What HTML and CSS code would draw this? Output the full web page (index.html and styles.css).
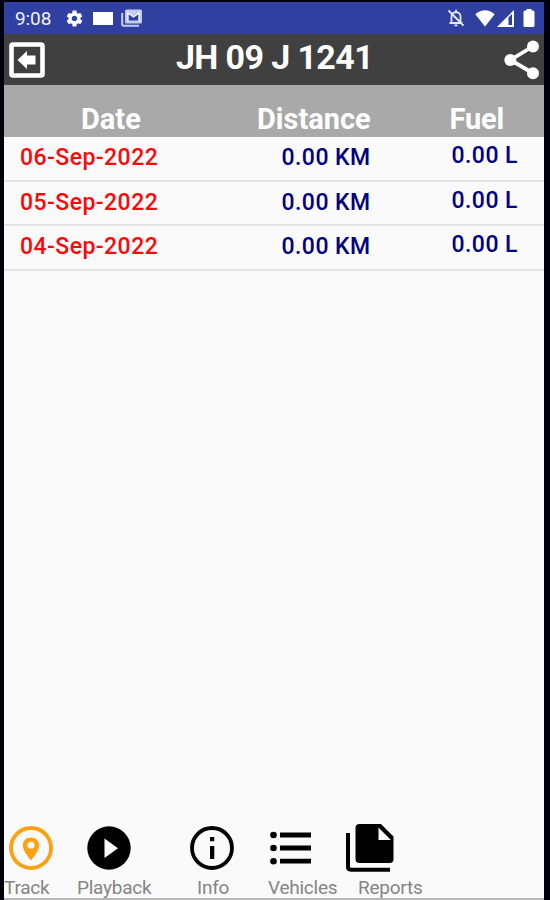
FILE: index.html
```html
<!DOCTYPE html>
<html lang="en">
<head>
    <meta charset="UTF-8">
    <meta name="viewport" content="width=device-width, initial-scale=1.0">
    <title>JH 09 J 1241</title>
    <link rel="stylesheet" href="styles.css">
</head>
<body>
    <div class="phone">
        <div class="status-bar">
            <span class="time">9:08</span>
            <svg class="gear" width="19" height="19" viewBox="0 0 24 24" fill="#fff"><path d="M19.43 12.98c.04-.32.07-.64.07-.98s-.03-.66-.07-.98l2.11-1.65c.19-.15.24-.42.12-.64l-2-3.46c-.12-.22-.39-.3-.61-.22l-2.49 1c-.52-.4-1.08-.73-1.69-.98l-.38-2.65C14.46 2.18 14.25 2 14 2h-4c-.25 0-.46.18-.49.42l-.38 2.65c-.61.25-1.17.59-1.69.98l-2.49-1c-.23-.09-.49 0-.61.22l-2 3.46c-.13.22-.07.49.12.64l2.11 1.65c-.04.32-.07.65-.07.98s.03.66.07.98l-2.11 1.65c-.19.15-.24.42-.12.64l2 3.46c.12.22.39.3.61.22l2.49-1c.52.4 1.08.73 1.69.98l.38 2.65c.03.24.24.42.49.42h4c.25 0 .46-.18.49-.42l.38-2.65c.61-.25 1.17-.59 1.69-.98l2.49 1c.23.09.49 0 .61-.22l2-3.46c.12-.22.07-.49-.12-.64l-2.11-1.65zM12 15.5c-1.93 0-3.5-1.57-3.5-3.5s1.57-3.5 3.5-3.5 3.5 1.57 3.5 3.5-1.57 3.5-3.5 3.5z"/></svg>
            <span class="block"></span>
            <svg class="mail" width="22" height="18" viewBox="0 0 22 18" fill="none">
                <path d="M1.2 4v11.500q0 1.300 1.300 1.300H18" stroke="#c5cbef" stroke-width="2"/>
                <rect x="4" y=".5" width="17" height="14" rx="1.500" fill="#c5cbef"/>
                <path d="M7 11.500V4l5.500 4L18 4v7.500z" fill="#2f3f9f"/>
                <path d="M7 12V4l5.500 4L18 4v8" stroke="#fff" stroke-width="1.300"/>
            </svg>
            <svg class="bell" width="18" height="18" viewBox="0 0 18 18" fill="none" stroke="#e4e8ff" stroke-width="1.800">
                <path d="M4.500 14V7.500Q4.500 3.800 9 3.200q4.500.6 4.500 4.300V14M2.500 14h13M9 .8v2.400M7.500 16.300h3M1.500 1.500l15 15"/>
            </svg>
            <svg class="wifi" width="20" height="17" viewBox="0 0 20 17"><path d="M.3 4.200Q10-3.800 19.700 4.200L10 16.500z" fill="#fff"/></svg>
            <svg class="signal" width="17" height="17" viewBox="0 0 17 17"><path d="M0 17 17 0v17z" fill="#fff"/><path d="M11.500 7.500 15 4v11h-3.500z" fill="#3040a0"/></svg>
            <svg class="battery" width="12" height="18" viewBox="0 0 12 18"><path d="M3.500 0h5v1.500H10q1.500 0 1.500 1.500v13.500Q11.500 18 10 18H2Q.5 18 .5 16.500V3Q.5 1.500 2 1.500h1.500z" fill="#fff"/></svg>
        </div>

        <div class="toolbar">
            <svg class="back" width="36" height="36" viewBox="0 0 36 36">
                <rect x="2.500" y="2.500" width="31" height="31" rx="1.500" fill="none" stroke="#fff" stroke-width="4.600"/>
                <path d="M8.500 18 18 9v4.500h8.500v9H18V27z" fill="#fff"/>
            </svg>
            <h1 class="title">JH 09 J 1241</h1>
            <svg class="share" width="36" height="40" viewBox="0 0 36 40">
                <path d="M29.500 6 6.500 20l23 13.500" fill="none" stroke="#fff" stroke-width="3.800"/>
                <g fill="#fff"><circle cx="29" cy="6.500" r="6"/><circle cx="6.300" cy="20" r="6"/><circle cx="29" cy="33.300" r="6"/></g>
            </svg>
        </div>

        <div class="table-head">
            <span class="head-date">Date</span>
            <span class="head-distance">Distance</span>
            <span class="head-fuel">Fuel</span>
        </div>

        <div class="rows">
            <div class="row">
                <span class="date">06-Sep-2022</span>
                <span class="distance">0.00 KM</span>
                <span class="fuel">0.00 L</span>
            </div>
            <div class="row">
                <span class="date">05-Sep-2022</span>
                <span class="distance">0.00 KM</span>
                <span class="fuel">0.00 L</span>
            </div>
            <div class="row">
                <span class="date">04-Sep-2022</span>
                <span class="distance">0.00 KM</span>
                <span class="fuel">0.00 L</span>
            </div>
        </div>

        <div class="bottom-nav">
            <div class="nav-icons">
                <svg class="icon-track" width="44" height="44" viewBox="0 0 44 44">
                    <circle cx="22" cy="22" r="20" fill="none" stroke="#ffa012" stroke-width="3.800"/>
                    <path fill="#ffa012" fill-rule="evenodd" d="M22 11.500c-4.700 0-8.200 3.500-8.200 8 0 5.500 8.200 15 8.200 15s8.200-9.500 8.200-15c0-4.500-3.500-8-8.200-8zm0 4.200a3.500 3.500 0 1 1 0 7 3.500 3.500 0 0 1 0-7z"/>
                </svg>
                <svg class="icon-playback" width="44" height="44" viewBox="0 0 44 44">
                    <circle cx="22" cy="22" r="21.700"/>
                    <path d="M17.500 12.500v19.500L31 22.300z" fill="#fff"/>
                </svg>
                <svg class="icon-info" width="44" height="44" viewBox="0 0 44 44">
                    <circle cx="22" cy="22" r="20" fill="none" stroke="#000" stroke-width="3.800"/>
                    <path d="M20 11h4.300v4.200H20zM20 20h4.300v13H20z"/>
                </svg>
                <svg class="icon-vehicles" width="42" height="34" viewBox="0 0 42 34">
                    <circle cx="3.500" cy="4" r="3.300"/><circle cx="3.500" cy="17" r="3.300"/><circle cx="3.500" cy="30.200" r="3.300"/>
                    <path d="M10 1.600h31v4.800H10zM10 14.600h31v4.800H10zM10 27.800h31v4.800H10z"/>
                </svg>
                <svg class="icon-reports" width="50" height="50" viewBox="0 0 50 50">
                    <path fill-rule="evenodd" d="M14.500 1H36l12.500 12.500V36q0 4-4 4h-30q-4 0-4-4V5q0-4 4-4zM33.500 4.500V17H46z"/>
                    <path d="M3 10v33.500q0 3.200 3 3.200h39" fill="none" stroke="#000" stroke-width="4"/>
                </svg>
            </div>
            <div class="nav-labels">
                <span class="label-track">Track</span>
                <span class="label-playback">Playback</span>
                <span class="label-info">Info</span>
                <span class="label-vehicles">Vehicles</span>
                <span class="label-reports">Reports</span>
            </div>
        </div>
    </div>
</body>
</html>
```
FILE: styles.css
```css
* {
    box-sizing: border-box;
}

body {
    margin: 0;
    height: 900px;
    padding: 2px 6px 0 4px;
    background-color: #00000c;
    font-family: Roboto, sans-serif;
    overflow: hidden;
}

.phone {
    display: flex;
    flex-direction: column;
    height: 898px;
    background-color: #fafafa;
    border-bottom: 2px solid #b8b8b8;
}

svg {
    display: block;
    flex: none;
}

span, h1 {
    white-space: nowrap;
}

.status-bar {
    display: flex;
    align-items: center;
    height: 32px;
    padding-left: 11px;
    background-color: #3040a0;
    color: #f0f2ff;
}

.time {
    width: 50px;
    font-size: 19px;
    letter-spacing: -0.1px;
}

.block {
    width: 20px;
    height: 13px;
    margin: 0 8px 0 9px;
    background-color: #fff;
}

.bell {
    margin-left: auto;
}

.wifi {
    margin-left: 10px;
}

.signal {
    margin-left: 2px;
}

.battery {
    margin: 0 9px 0 9px;
}

.toolbar {
    display: flex;
    justify-content: space-between;
    height: 51px;
    padding: 8px 4px 0 5px;
    background-color: #404040;
}

.title {
    margin: -6px 0 0;
    font-size: 34px;
    line-height: 42px;
    font-weight: 700;
    letter-spacing: -0.6px;
    color: #fff;
}

.share {
    margin-top: -2px;
}

.table-head {
    display: flex;
    height: 52px;
    padding: 16px 0 0 77px;
    background-color: #a9a9a9;
    color: #fff;
    font-size: 29px;
    line-height: 36px;
    font-weight: 700;
}

.head-date {
    width: 176px;
}

.head-distance {
    width: 192.5px;
}

.head-fuel {
    letter-spacing: -0.2px;
}

.row {
    display: flex;
    height: 44.6px;
    padding: 6px 0 0 16px;
    border-bottom: 2px solid #e4e4e4;
    font-size: 23px;
    line-height: 30px;
    font-weight: 500;
    letter-spacing: 0.45px;
    color: #000080;
}

.date {
    width: 261.5px;
    color: #fc0808;
}

.distance {
    width: 170px;
}

.fuel {
    margin-top: -2px;
}

.bottom-nav {
    margin-top: auto;
    height: 75px;
}

.nav-icons {
    display: flex;
    align-items: center;
    height: 50px;
    padding-left: 5px;
}

.icon-playback {
    margin-left: 34px;
}

.icon-info {
    margin-left: 59px;
}

.icon-vehicles {
    margin-left: 36px;
}

.icon-reports {
    margin-left: 33px;
}

.nav-labels {
    display: flex;
    height: 25px;
    color: #858585;
    font-size: 19px;
    line-height: 30px;
    letter-spacing: -0.25px;
}

.label-track {
    width: 73px;
}

.label-playback {
    width: 120px;
}

.label-info {
    width: 71px;
}

.label-vehicles {
    width: 90px;
}
```
